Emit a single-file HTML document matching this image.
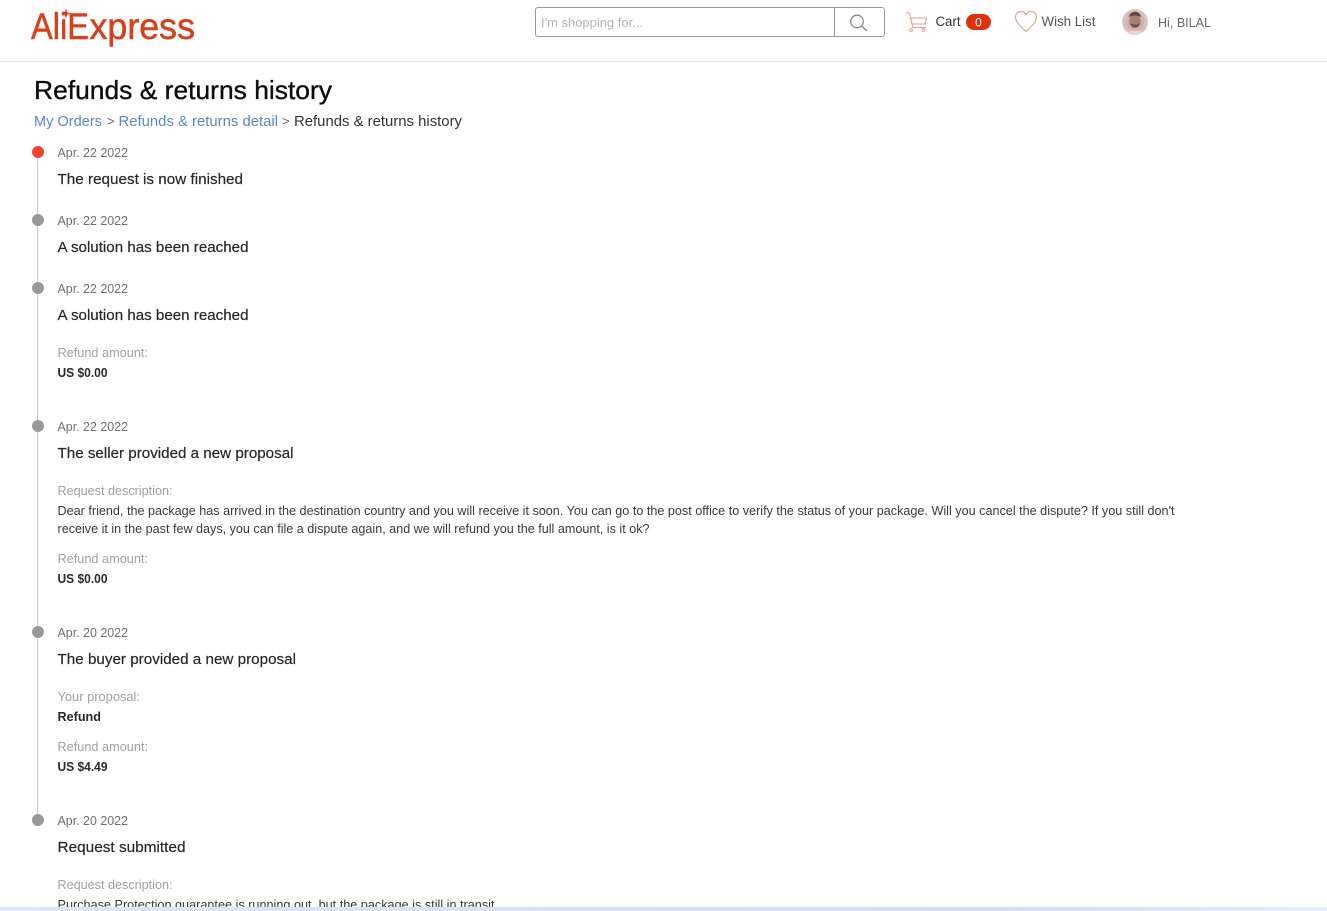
<!DOCTYPE html>
<html lang="en">
<head>
<meta charset="utf-8">
<title>Refunds &amp; returns history</title>
<style>
html,body{margin:0;padding:0;background:#fff;width:1327px;height:911px;overflow:hidden}
svg{display:block}
text{font-family:"Liberation Sans",sans-serif;white-space:pre}
.d{font-size:12.5px;fill:#707070}
.t{font-size:15px;fill:#282828;stroke:#282828;stroke-width:.2px}
.l{font-size:12.5px;fill:#a0a0a0}
.v{font-size:12.5px;font-weight:bold;fill:#2a2a2a}
.b{font-size:12.5px;fill:#3a3a3a}
</style>
</head>
<body>
<svg width="1327" height="911" viewBox="0 0 1327 911" xmlns="http://www.w3.org/2000/svg">
<defs>
<linearGradient id="bar" x1="0" x2="1" y1="0" y2="0">
<stop offset="0" stop-color="#dfe6f4"/><stop offset=".75" stop-color="#d6dcea"/><stop offset="1" stop-color="#e3edf8"/>
</linearGradient>
<radialGradient id="av" cx=".5" cy=".5" r=".55">
<stop offset="0" stop-color="#b8968a"/><stop offset="1" stop-color="#e0cccc"/>
</radialGradient>
<clipPath id="avc"><circle cx="1135" cy="22" r="13"/></clipPath>
</defs>

<!-- logo -->
<text x="31" y="39" font-size="37" fill="#d8401c" stroke="#d8401c" stroke-width=".5" textLength="58" lengthAdjust="spacingAndGlyphs">AliE</text>
<text x="89.500" y="39" font-size="37" fill="#d8401c" stroke="#d8401c" stroke-width=".5" textLength="105.500" lengthAdjust="spacingAndGlyphs">xpress</text>
<path d="M66 8.500 L67.200 12.300 L71 13.500 L67.200 14.700 L66 18.500 L64.800 14.700 L61 13.500 L64.800 12.300Z" fill="#d8401c"/>

<line x1="0" y1="61.500" x2="1327" y2="61.500" stroke="#e6e6e6"/>

<!-- search -->
<rect x="535.500" y="7.500" width="349" height="29" rx="2.500" fill="#fff" stroke="#999"/>
<line x1="834.500" y1="8" x2="834.500" y2="36" stroke="#999"/>
<text x="541" y="27" font-size="12.500" fill="#b4b4b4" textLength="102" lengthAdjust="spacingAndGlyphs">I'm shopping for...</text>
<circle cx="857" cy="21.500" r="6.300" fill="none" stroke="#8a8a8a" stroke-width="1.300"/>
<line x1="861.500" y1="26" x2="867" y2="31" stroke="#8a8a8a" stroke-width="1.500"/>

<!-- cart -->
<path d="M906 12 L909.500 13.500 L913 27.500 L926 27.500 M909.500 18 L926.500 18 L925 24 L911.500 24" fill="none" stroke="#e2a093" stroke-width="1.100"/>
<circle cx="911" cy="30" r="1.400" fill="none" stroke="#e2a093"/>
<circle cx="923.500" cy="30" r="1.400" fill="none" stroke="#e2a093"/>
<text x="935.500" y="26" font-size="13.500" fill="#333" textLength="25" lengthAdjust="spacingAndGlyphs">Cart</text>
<rect x="966" y="14" width="25" height="16" rx="8" fill="#e0310c"/>
<text x="978.500" y="26.500" font-size="12" fill="#fff" text-anchor="middle">0</text>

<!-- heart -->
<path d="M1026 31.500 C1021 26.500 1015.500 22.500 1015.500 17 C1015.500 13.500 1018.200 11.500 1021 11.500 C1023 11.500 1025 12.700 1026 14.700 C1027 12.700 1029 11.500 1031 11.500 C1033.800 11.500 1036.500 13.500 1036.500 17 C1036.500 22.500 1031 26.500 1026 31.500Z" fill="none" stroke="#e2a39c" stroke-width="1.200"/>
<text x="1041.500" y="26" font-size="13.500" fill="#555" textLength="54" lengthAdjust="spacingAndGlyphs">Wish List</text>

<!-- avatar -->
<circle cx="1135" cy="22" r="13" fill="url(#av)"/>
<g clip-path="url(#avc)">
<path d="M1122 36 C1124 29 1146 29 1148 36Z" fill="#ecd3d5"/>
<ellipse cx="1135" cy="21" rx="5.500" ry="7" fill="#a9806e"/>
<path d="M1129 17 C1130 10 1140 10 1141 17 C1138 15 1132 15 1129 17Z" fill="#5a463c"/>
<path d="M1130 23 C1131 29 1139 29 1140 23 C1138 25 1132 25 1130 23Z" fill="#6a5246"/>
</g>
<text x="1158" y="27" font-size="13" fill="#666" textLength="53" lengthAdjust="spacingAndGlyphs">Hi, BILAL</text>

<!-- heading -->
<text x="34" y="99" font-size="26" fill="#0c0c0c" stroke="#0c0c0c" stroke-width=".35" textLength="298" lengthAdjust="spacingAndGlyphs">Refunds &amp; returns history</text>
<text x="34" y="126" font-size="15" fill="#5d84d0" textLength="68" lengthAdjust="spacingAndGlyphs">My Orders</text>
<text x="107" y="125.500" font-size="13" fill="#666">&gt;</text>
<text x="118.500" y="126" font-size="15" fill="#5d84d0" textLength="159.500" lengthAdjust="spacingAndGlyphs">Refunds &amp; returns detail</text>
<text x="282" y="125.500" font-size="13" fill="#666">&gt;</text>
<text x="294" y="126" font-size="15" fill="#333" textLength="168" lengthAdjust="spacingAndGlyphs">Refunds &amp; returns history</text>

<!-- timeline -->
<line x1="37.500" y1="152" x2="37.500" y2="820" stroke="#c8c8c8"/>
<circle cx="38" cy="152" r="6" fill="#f0442c"/>
<circle cx="38" cy="220" r="6" fill="#999"/>
<circle cx="38" cy="288" r="6" fill="#999"/>
<circle cx="38" cy="426" r="6" fill="#999"/>
<circle cx="38" cy="632" r="6" fill="#999"/>
<circle cx="38" cy="820" r="6" fill="#999"/>

<text class="d" x="57.500" y="157" textLength="70.500" lengthAdjust="spacingAndGlyphs">Apr. 22 2022</text>
<text class="t" x="57.500" y="184" textLength="185.500" lengthAdjust="spacingAndGlyphs">The request is now finished</text>

<text class="d" x="57.500" y="225" textLength="70.500" lengthAdjust="spacingAndGlyphs">Apr. 22 2022</text>
<text class="t" x="57.500" y="252" textLength="191" lengthAdjust="spacingAndGlyphs">A solution has been reached</text>

<text class="d" x="57.500" y="293" textLength="70.500" lengthAdjust="spacingAndGlyphs">Apr. 22 2022</text>
<text class="t" x="57.500" y="320" textLength="191" lengthAdjust="spacingAndGlyphs">A solution has been reached</text>
<text class="l" x="57.500" y="357" textLength="90.500" lengthAdjust="spacingAndGlyphs">Refund amount:</text>
<text class="v" x="57.500" y="377" textLength="50" lengthAdjust="spacingAndGlyphs">US $0.00</text>

<text class="d" x="57.500" y="431" textLength="70.500" lengthAdjust="spacingAndGlyphs">Apr. 22 2022</text>
<text class="t" x="57.500" y="458" textLength="236" lengthAdjust="spacingAndGlyphs">The seller provided a new proposal</text>
<text class="l" x="57.500" y="495" textLength="115" lengthAdjust="spacingAndGlyphs">Request description:</text>
<text class="b" x="57.500" y="515" textLength="1117" lengthAdjust="spacingAndGlyphs">Dear friend, the package has arrived in the destination country and you will receive it soon. You can go to the post office to verify the status of your package. Will you cancel the dispute? If you still don't</text>
<text class="b" x="57.500" y="533" textLength="592" lengthAdjust="spacingAndGlyphs">receive it in the past few days, you can file a dispute again, and we will refund you the full amount, is it ok?</text>
<text class="l" x="57.500" y="563" textLength="90.500" lengthAdjust="spacingAndGlyphs">Refund amount:</text>
<text class="v" x="57.500" y="583" textLength="50" lengthAdjust="spacingAndGlyphs">US $0.00</text>

<text class="d" x="57.500" y="637" textLength="70.500" lengthAdjust="spacingAndGlyphs">Apr. 20 2022</text>
<text class="t" x="57.500" y="664" textLength="238.500" lengthAdjust="spacingAndGlyphs">The buyer provided a new proposal</text>
<text class="l" x="57.500" y="701" textLength="82.500" lengthAdjust="spacingAndGlyphs">Your proposal:</text>
<text class="v" x="57.500" y="721" textLength="43.500" lengthAdjust="spacingAndGlyphs">Refund</text>
<text class="l" x="57.500" y="751" textLength="90.500" lengthAdjust="spacingAndGlyphs">Refund amount:</text>
<text class="v" x="57.500" y="771" textLength="50" lengthAdjust="spacingAndGlyphs">US $4.49</text>

<text class="d" x="57.500" y="825" textLength="70.500" lengthAdjust="spacingAndGlyphs">Apr. 20 2022</text>
<text class="t" x="57.500" y="852" textLength="128" lengthAdjust="spacingAndGlyphs">Request submitted</text>
<text class="l" x="57.500" y="889" textLength="115" lengthAdjust="spacingAndGlyphs">Request description:</text>
<text class="b" x="57.500" y="909" textLength="437" lengthAdjust="spacingAndGlyphs">Purchase Protection guarantee is running out, but the package is still in transit</text>

<!-- bottom strip -->
<rect x="0" y="907" width="1327" height="4" fill="url(#bar)"/>
</svg>
</body>
</html>
